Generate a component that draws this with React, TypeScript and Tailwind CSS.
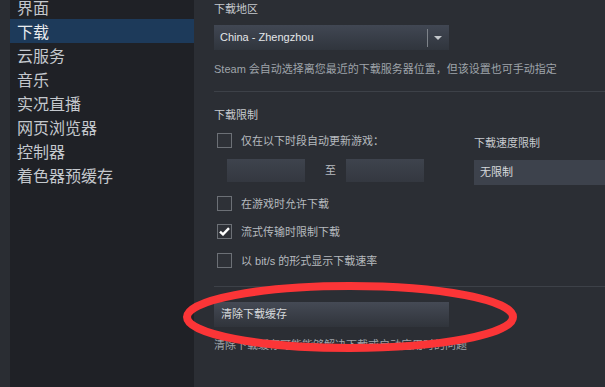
const font = "font-['Liberation_Sans','Noto_Sans_CJK_SC',sans-serif]";

const navItems = ["界面", "下载", "云服务", "音乐", "实况直播", "网页浏览器", "控制器", "着色器预缓存"];

const CheckBox = ({ checked }: { checked?: boolean }) => (
  <div className="w-[15px] h-[15px] border border-[#6c7076] bg-[#2e3137] flex items-center justify-center">
    {checked && (
      <svg width="11" height="9" viewBox="0 0 11 9">
        <path d="M1 4.6 L4 7.4 L10 1.2" fill="none" stroke="#ffffff" strokeWidth="2.4" />
      </svg>
    )}
  </div>
);

const CheckRow = ({ label, checked, className }: { label: string; checked?: boolean; className?: string }) => (
  <div className={`flex items-center h-[15px] ml-[3px] ${className ?? ""}`}>
    <CheckBox checked={checked} />
    <span className="ml-[9px] text-[11px] leading-[14px] text-[#b6babf]">{label}</span>
  </div>
);

export default function App() {
  return (
    <div className={`relative flex w-[605px] h-[387px] overflow-hidden ${font}`}>
      <div className="w-[10px] bg-[#2a2d33]" />

      {/* sidebar */}
      <div className="w-[184px] bg-[#1f2126] flex flex-col">
        <div className="-mt-[5px]">
          {navItems.map((item) => (
            <div
              key={item}
              className={
                item === "下载"
                  ? "h-6 pt-[4px] leading-[20px] pl-[7px] text-[16px] bg-[#1d3a5a] text-[#e8ebee]"
                  : "h-6 pt-[4px] leading-[20px] pl-[7px] text-[16px] text-[#c4c8cd]"
              }
            >
              {item}
            </div>
          ))}
        </div>
      </div>

      {/* main */}
      <div className="flex-1 bg-[#2b2e34] pl-[20px] flex flex-col">
        <div className="mt-[2px] text-[11px] leading-[14px] text-[#c6cacf]">下载地区</div>
        <div className="mt-[9px] h-[25px] w-[235px] bg-gradient-to-b from-[#414753] to-[#30353d] flex items-center">
          <span className="pl-[6px] text-[11px] text-[#e4e7ea] flex-1">China - Zhengzhou</span>
          <div className="w-px h-[18px] bg-[#7e838a]" />
          <svg width="21" height="6" viewBox="0 0 21 6">
            <path d="M6 1 L14 1 L10 5 Z" fill="#c3c7cb" />
          </svg>
        </div>
        <div className="mt-[12px] text-[11px] leading-[14px] text-[#9fa4aa]">
          Steam 会自动选择离您最近的下载服务器位置，但该设置也可手动指定
        </div>

        <div className="mt-[15px] h-px bg-[#3d4148]" />

        <div className="mt-[16px] text-[11px] leading-[14px] text-[#c6cacf]">下载限制</div>

        <div className="flex">
          <div className="w-[260px]">
            <CheckRow label="仅在以下时段自动更新游戏：" className="mt-[11px]" />
            <div className="mt-[11px] flex items-center">
              <div className="ml-[13px] w-[78px] h-[23px] bg-gradient-to-b from-[#3e434d] to-[#343840]" />
              <span className="ml-[20px] text-[11px] text-[#b6babf]">至</span>
              <div className="ml-[10px] w-[78px] h-[23px] bg-gradient-to-b from-[#3e434d] to-[#343840]" />
            </div>
          </div>
          <div className="flex-1">
            <div className="mt-[14px] text-[11px] leading-[14px] text-[#c6cacf]">下载速度限制</div>
            <div className="mt-[10px] h-[25px] bg-[#3d424c] flex items-center">
              <span className="pl-[6px] text-[11px] text-[#d7dadd]">无限制</span>
            </div>
          </div>
        </div>

        <CheckRow label="在游戏时允许下载" className="mt-[11px]" />
        <CheckRow label="流式传输时限制下载" checked className="mt-[13px]" />
        <CheckRow label="以 bit/s 的形式显示下载速率" className="mt-[14px]" />

        <div className="mt-[18px] h-px bg-[#3d4148]" />

        <div className="mt-[15px] h-[25px] w-[235px] bg-gradient-to-b from-[#454a55] to-[#30343b] flex items-center">
          <span className="pl-[7px] text-[11px] text-[#d7dadd]">清除下载缓存</span>
        </div>
        <div className="mt-[11px] text-[11px] leading-[14px] text-[#9fa4aa]">
          清除下载缓存可能能够解决下载或启动应用时的问题
        </div>
      </div>

      {/* red annotation */}
      <svg className="absolute inset-0 pointer-events-none" width="605" height="387" viewBox="0 0 605 387">
        <ellipse cx="350" cy="317" rx="163" ry="31" fill="none" stroke="#fb3537" strokeWidth="8" />
      </svg>
    </div>
  );
}
